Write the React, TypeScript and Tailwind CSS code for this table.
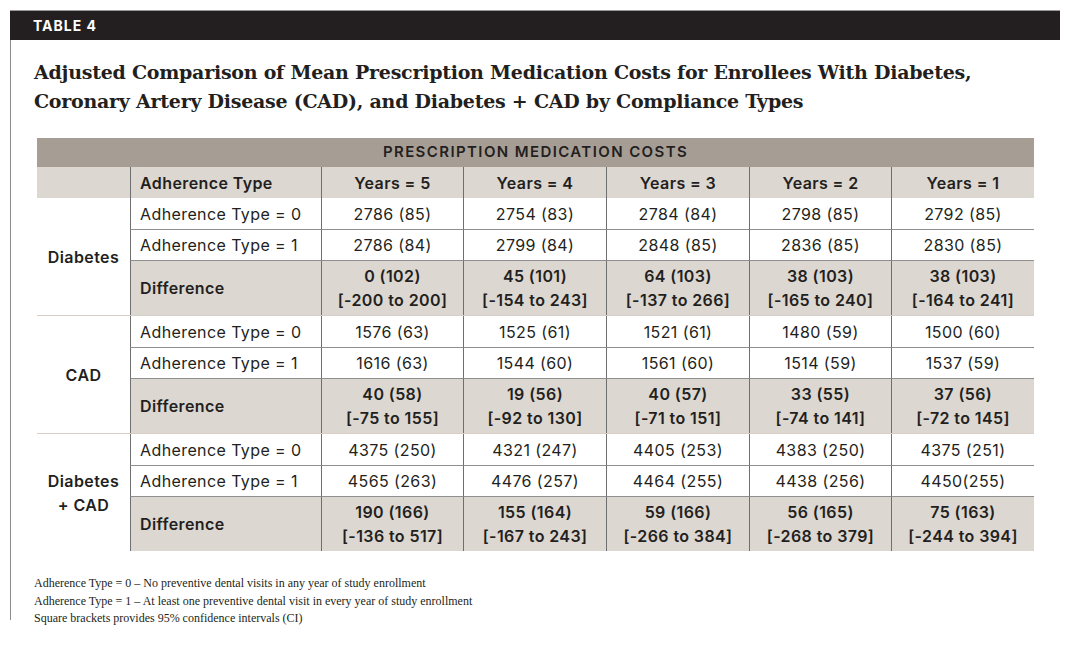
import React from "react";

type Group = {
  label: React.ReactNode;
  r0: string[];
  r1: string[];
  diff: [string, string][];
};

const groups: Group[] = [
  {
    label: "Diabetes",
    r0: ["2786 (85)", "2754 (83)", "2784 (84)", "2798 (85)", "2792 (85)"],
    r1: ["2786 (84)", "2799 (84)", "2848 (85)", "2836 (85)", "2830 (85)"],
    diff: [
      ["0 (102)", "[-200 to 200]"],
      ["45 (101)", "[-154 to 243]"],
      ["64 (103)", "[-137 to 266]"],
      ["38 (103)", "[-165 to 240]"],
      ["38 (103)", "[-164 to 241]"],
    ],
  },
  {
    label: "CAD",
    r0: ["1576 (63)", "1525 (61)", "1521 (61)", "1480 (59)", "1500 (60)"],
    r1: ["1616 (63)", "1544 (60)", "1561 (60)", "1514 (59)", "1537 (59)"],
    diff: [
      ["40 (58)", "[-75 to 155]"],
      ["19 (56)", "[-92 to 130]"],
      ["40 (57)", "[-71 to 151]"],
      ["33 (55)", "[-74 to 141]"],
      ["37 (56)", "[-72 to 145]"],
    ],
  },
  {
    label: (
      <>
        Diabetes
        <br />+ CAD
      </>
    ),
    r0: ["4375 (250)", "4321 (247)", "4405 (253)", "4383 (250)", "4375 (251)"],
    r1: ["4565 (263)", "4476 (257)", "4464 (255)", "4438 (256)", "4450(255)"],
    diff: [
      ["190 (166)", "[-136 to 517]"],
      ["155 (164)", "[-167 to 243]"],
      ["59 (166)", "[-266 to 384]"],
      ["56 (165)", "[-268 to 379]"],
      ["75 (163)", "[-244 to 394]"],
    ],
  },
];

const years = ["Years = 5", "Years = 4", "Years = 3", "Years = 2", "Years = 1"];

export default function App() {
  return (
    <div className="w-[1071px] h-[651px] bg-white text-[#231f20] overflow-hidden">
      <div className="pt-[10px] pl-[10px] w-[1060px]">
        <div className="h-[30px] bg-[#231f20] border-t border-[#9a9a9a] flex items-center pl-[23px]">
          <span
            className="text-white text-[14px] font-bold tracking-[1px]"
            style={{ fontFamily: "Inter, 'Liberation Sans', sans-serif" }}
          >
            TABLE 4
          </span>
        </div>
        <div className="border-l border-[#8c8c8c] h-[580px] pl-[23px] pt-[18px]">
          <h1
            className="text-[19px] font-bold leading-[29px] tracking-[-0.25px]"
            style={{ fontFamily: "'DejaVu Serif', 'Liberation Serif', serif" }}
          >
            Adjusted Comparison of Mean Prescription Medication Costs for Enrollees With Diabetes,
            <br />
            Coronary Artery Disease (CAD), and Diabetes + CAD by Compliance Types
          </h1>
          <div
            className="ml-[3px] mt-[22px] w-[997px] text-[16px] tracking-[0.4px]"
            style={{ fontFamily: "Inter, 'Liberation Sans', sans-serif" }}
          >
            <div className="h-[29px] bg-[#a69e95] flex items-center justify-center font-semibold text-[15px] tracking-[1.4px]">
              PRESCRIPTION MEDICATION COSTS
            </div>
            <div className="grid grid-cols-[93px_191px_142px_143px_143px_142px_143px] bg-[#ddd7d1] h-[31px] font-semibold">
              <div />
              <div className="border-l border-[#6f6f6f] flex items-center pl-[9px]">Adherence Type</div>
              {years.map((y) => (
                <div key={y} className="border-l border-[#6f6f6f] flex items-center justify-center">
                  {y}
                </div>
              ))}
            </div>
            {groups.map((g, gi) => (
              <div
                key={gi}
                className={
                  "grid grid-cols-[93px_191px_142px_143px_143px_142px_143px] grid-rows-[31px_31px_55px] " +
                  (gi > 0 ? "border-t border-[#d6cec7]" : "")
                }
              >
                <div className="row-span-3 flex items-center justify-center text-center font-semibold leading-[24px]">
                  {g.label}
                </div>
                <div className="border-l border-[#6f6f6f] flex items-center pl-[9px]">Adherence Type = 0</div>
                {g.r0.map((v, i) => (
                  <div key={i} className="border-l border-[#6f6f6f] flex items-center justify-center">
                    {v}
                  </div>
                ))}
                <div className="border-l border-t border-[#8f8f8f] border-l-[#6f6f6f] flex items-center pl-[9px]">
                  Adherence Type = 1
                </div>
                {g.r1.map((v, i) => (
                  <div
                    key={i}
                    className="border-l border-t border-[#8f8f8f] border-l-[#6f6f6f] flex items-center justify-center"
                  >
                    {v}
                  </div>
                ))}
                <div className="border-l border-t border-[#8f8f8f] border-l-[#6f6f6f] bg-[#ddd7d1] flex items-center pl-[9px] font-semibold">
                  Difference
                </div>
                {g.diff.map((d, i) => (
                  <div
                    key={i}
                    className="border-l border-t border-[#8f8f8f] border-l-[#6f6f6f] bg-[#ddd7d1] flex flex-col items-center justify-center font-semibold leading-[24px]"
                  >
                    <span>{d[0]}</span>
                    <span>{d[1]}</span>
                  </div>
                ))}
              </div>
            ))}
          </div>
          <div
            className="mt-[24px] text-[12px] leading-[17.5px]"
            style={{ fontFamily: "'Liberation Serif', 'DejaVu Serif', serif" }}
          >
            <div>Adherence Type = 0 – No preventive dental visits in any year of study enrollment</div>
            <div>Adherence Type = 1 – At least one preventive dental visit in every year of study enrollment</div>
            <div>Square brackets provides 95% confidence intervals (CI)</div>
          </div>
        </div>
      </div>
    </div>
  );
}
